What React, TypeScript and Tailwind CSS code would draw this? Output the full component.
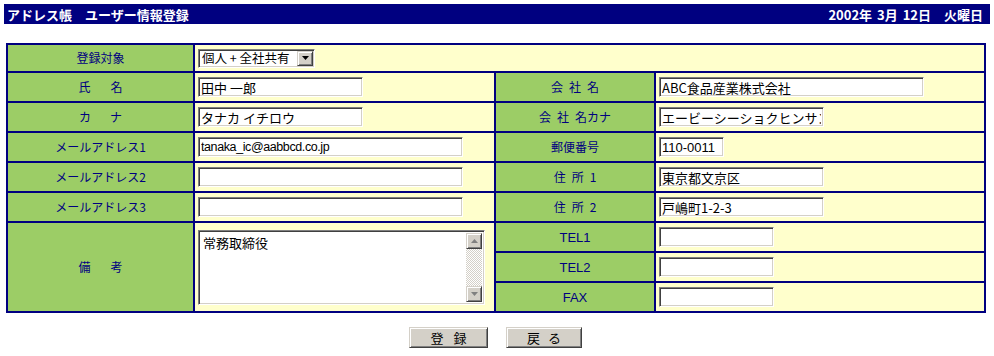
import React from "react";

const FONT = "[font-family:'Noto_Sans_CJK_JP','Noto_Sans',sans-serif]";
const LATIN = "[font-family:'Liberation_Sans','Noto_Sans_CJK_JP',sans-serif]";
const inset =
  "border border-t-[#808080] border-l-[#808080] border-b-white border-r-white shadow-[inset_1px_1px_0_#404040,inset_-1px_-1px_0_#d4d0c8] bg-white";
const raised =
  "border border-t-[#d4d0c8] border-l-[#d4d0c8] border-b-[#404040] border-r-[#404040] shadow-[inset_1px_1px_0_#ffffff,inset_-1px_-1px_0_#808080] bg-[#d4d0c8]";

function Label({
  parts,
  gap = 0,
  className = "",
  textClass = "text-[12px]",
}: {
  parts: string[];
  gap?: number;
  className?: string;
  textClass?: string;
}) {
  return (
    <div
      className={`bg-[#9ccd66] flex items-center justify-center leading-none text-[#000080] ${textClass} ${className}`}
    >
      <div className="flex items-center" style={{ gap }}>
        {parts.map((p, i) => (
          <span key={i}>{p}</span>
        ))}
      </div>
    </div>
  );
}

function Cell({
  children,
  className = "",
}: {
  children?: React.ReactNode;
  className?: string;
}) {
  return (
    <div className={`bg-[#ffffcc] flex items-center pl-[3px] ${className}`}>
      {children}
    </div>
  );
}

function TextBox({
  value = "",
  width,
  textClass = `text-[13px] ${FONT}`,
}: {
  value?: string;
  width: number;
  textClass?: string;
}) {
  return (
    <input
      readOnly
      defaultValue={value}
      style={{ width }}
      className={`${inset} h-[20px] px-[2px] leading-none text-black outline-none ${textClass}`}
    />
  );
}

function Arrow({ down }: { down?: boolean }) {
  return (
    <svg width="7" height="4" viewBox="0 0 7 4" className="block">
      {down ? (
        <polygon points="0,0 7,0 3.5,4" fill="currentColor" />
      ) : (
        <polygon points="0,4 7,4 3.5,0" fill="currentColor" />
      )}
    </svg>
  );
}

export default function App() {
  return (
    <div className={`w-[994px] h-[356px] bg-white p-[4px] ${FONT}`}>
      {/* Title bar */}
      <div className="h-[20px] bg-[#000080] flex items-center justify-between pl-[3px] pr-[7px] text-white font-bold text-[13px] leading-none">
        <span>アドレス帳　ユーザー情報登録</span>
        <span className="[word-spacing:2px]">2002年 3月 12日　火曜日</span>
      </div>

      {/* Form table */}
      <div className="ml-[2px] mt-[19px] w-[980px] grid grid-cols-[185px_299px_158px_328px] grid-rows-[26px_repeat(8,28px)] gap-[2px] p-[2px] bg-[#000080]">
        {/* row 1 */}
        <Label parts={["登録対象"]} />
        <Cell className="col-span-3">
          <div className={`${inset} w-[117px] h-[19px] flex items-center`}>
            <span className="flex-1 pl-[3px] text-[12.5px] leading-none text-black whitespace-nowrap">
              個人 + 全社共有
            </span>
            <div
              className={`${raised} w-[16px] h-[15px] mr-[1px] flex items-center justify-center text-black`}
            >
              <Arrow down />
            </div>
          </div>
        </Cell>

        {/* row 2 */}
        <Label parts={["氏", "名"]} gap={20} />
        <Cell>
          <TextBox value="田中 一郎" width={165} />
        </Cell>
        <Label parts={["会", "社", "名"]} gap={6} />
        <Cell>
          <TextBox value="ABC食品産業株式会社" width={265} />
        </Cell>

        {/* row 3 */}
        <Label parts={["カ", "ナ"]} gap={19} />
        <Cell>
          <TextBox value="タナカ イチロウ" width={165} />
        </Cell>
        <Label parts={["会", "社", "名カナ"]} gap={6} />
        <Cell>
          <TextBox value="エービーシーショクヒンサンギョウ" width={165} />
        </Cell>

        {/* row 4 */}
        <Label parts={["メールアドレス1"]} />
        <Cell>
          <TextBox
            value="tanaka_ic@aabbcd.co.jp"
            width={265}
            textClass={`text-[12.5px] tracking-[-0.4px] ${LATIN}`}
          />
        </Cell>
        <Label parts={["郵便番号"]} />
        <Cell>
          <TextBox
            value="110-0011"
            width={65}
            textClass={`text-[13px] ${LATIN}`}
          />
        </Cell>

        {/* row 5 */}
        <Label parts={["メールアドレス2"]} />
        <Cell>
          <TextBox width={265} />
        </Cell>
        <Label parts={["住", "所", "1"]} gap={6} />
        <Cell>
          <TextBox value="東京都文京区" width={165} />
        </Cell>

        {/* row 6 */}
        <Label parts={["メールアドレス3"]} />
        <Cell>
          <TextBox width={265} />
        </Cell>
        <Label parts={["住", "所", "2"]} gap={6} />
        <Cell>
          <TextBox value="戸嶋町1-2-3" width={165} />
        </Cell>

        {/* rows 7-9 */}
        <Label parts={["備", "考"]} gap={20} className="row-span-3" />
        <Cell className="row-span-3">
          <div className={`${inset} w-[287px] h-[75px] flex p-[2px]`}>
            <div className="flex-1 pl-[2px] pt-[3px] text-[13px] leading-none text-black">
              常務取締役
            </div>
            <div className="w-[16px] flex flex-col">
              <div
                className={`${raised} h-[16px] flex items-center justify-center text-[#808080]`}
              >
                <Arrow />
              </div>
              <div className="flex-1 bg-[repeating-conic-gradient(#d4d0c8_0_25%,#ffffff_0_50%)] bg-[length:2px_2px]" />
              <div
                className={`${raised} h-[16px] flex items-center justify-center text-[#808080]`}
              >
                <Arrow down />
              </div>
            </div>
          </div>
        </Cell>
        <Label parts={["TEL1"]} textClass={`text-[13px] ${LATIN}`} />
        <Cell>
          <TextBox width={115} />
        </Cell>
        <Label parts={["TEL2"]} textClass={`text-[13px] ${LATIN}`} />
        <Cell>
          <TextBox width={115} />
        </Cell>
        <Label parts={["FAX"]} textClass={`text-[13px] ${LATIN}`} />
        <Cell>
          <TextBox width={115} />
        </Cell>
      </div>

      {/* Buttons */}
      <div className="mt-[14px] ml-[405px] flex gap-[18px]">
        <button
          className={`${raised} w-[79px] h-[21px] flex items-center justify-center gap-[10px] text-[13px] leading-none text-black`}
        >
          <span>登</span>
          <span>録</span>
        </button>
        <button
          className={`${raised} w-[76px] h-[21px] flex items-center justify-center gap-[8px] text-[13px] leading-none text-black`}
        >
          <span>戻</span>
          <span>る</span>
        </button>
      </div>
    </div>
  );
}
